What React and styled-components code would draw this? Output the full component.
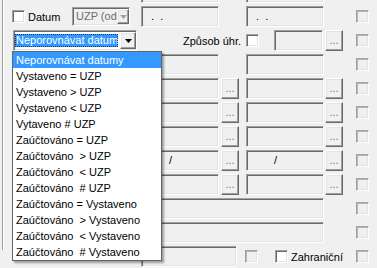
import React from 'react'
import styled, { createGlobalStyle } from 'styled-components'

const GlobalStyle = createGlobalStyle`
  html, body {
    margin: 0;
    padding: 0;
    background: #f0f0f0;
  }
  body {
    font-family: "Liberation Sans", Arial, sans-serif;
    font-size: 11px;
    color: #000;
  }
`

const sunken = `
  border: 1px solid;
  border-color: #a0a0a0 #ffffff #ffffff #a0a0a0;
  box-shadow: inset 1px 1px #696969, inset -1px -1px #e3e3e3;
`

const raised = `
  border: 1px solid;
  border-color: #ffffff #696969 #696969 #ffffff;
  box-shadow: inset -1px -1px #a0a0a0, inset 1px 1px #e3e3e3;
`

const Window = styled.div`
  position: relative;
  width: 377px;
  height: 268px;
  overflow: hidden;
  background: #f0f0f0;
`

const Group = styled.div`
  height: 100%;
  margin-left: 2px;
  border-left: 1px solid #a0a0a0;
  box-shadow: inset 1px 0 #ffffff;
`

const Rows = styled.div`
  display: flex;
  flex-direction: column;
  gap: 3px;
  width: 366px;
  margin-top: -18px;
`

const Row = styled.div`
  display: flex;
  align-items: center;
  height: 21px;
`

const Field = styled.div`
  ${sunken}
  box-sizing: border-box;
  flex: none;
  width: ${p => p.$w}px;
  height: 21px;
  margin-left: ${p => p.$ml || 0}px;
  padding-left: ${p => p.$pad ?? 9}px;
  line-height: 18px;
  white-space: pre;
  overflow: hidden;
  background: #f0f0f0;
`

const Browse = styled.div`
  ${raised}
  box-sizing: border-box;
  flex: none;
  width: 18px;
  height: 21px;
  margin-left: ${p => p.$ml || 0}px;
  color: #6d6d6d;
  line-height: 18px;
  text-align: center;
  background: #f0f0f0;
`

const Check = styled.div`
  box-sizing: border-box;
  flex: none;
  width: 13px;
  height: 13px;
  margin-left: ${p => (p.$right ? 'auto' : `${p.$ml || 0}px`)};
  border: 1px solid;
  border-color: #a0a0a0 #ffffff #ffffff #a0a0a0;
  box-shadow: inset 1px 1px ${p => (p.$on ? '#696969' : '#b4b4b4')},
    inset -1px -1px #e3e3e3;
  background: ${p => (p.$on ? '#ffffff' : '#f0f0f0')};
`

const Label = styled.span`
  flex: none;
  width: ${p => (p.$w ? `${p.$w}px` : 'auto')};
  margin-left: ${p => p.$ml || 0}px;
  white-space: nowrap;
`

const Combo = styled.div`
  ${sunken}
  box-sizing: border-box;
  flex: none;
  display: flex;
  width: ${p => p.$w}px;
  height: ${p => p.$h || 21}px;
  margin-left: ${p => p.$ml || 0}px;
  padding: 1px 0 1px ${p => (p.$disabled ? 3 : 1)}px;
  background: ${p => (p.$disabled ? '#f0f0f0' : '#ffffff')};
  color: ${p => (p.$disabled ? '#6d6d6d' : '#000')};
`

const ComboText = styled.div`
  flex: 1;
  min-width: 0;
  overflow: hidden;
  white-space: nowrap;
  line-height: ${p => (p.$selected ? 13 : 15)}px;
  margin: ${p => (p.$selected ? '2px 2px 2px 0' : '0')};
  padding-left: ${p => (p.$selected ? 1 : 0)}px;
  background: ${p => (p.$selected ? '#3399ff' : 'transparent')};
  color: ${p => (p.$selected ? '#ffffff' : 'inherit')};
  outline: ${p => (p.$selected ? '1px dotted #1a3a6a' : 'none')};
  outline-offset: -1px;
`

const DropButton = styled.div`
  ${raised}
  box-sizing: border-box;
  flex: none;
  width: ${p => p.$w}px;
  display: flex;
  align-items: center;
  justify-content: center;
  background: #f0f0f0;
`

const ListPopup = styled.div`
  position: absolute;
  left: 12px;
  top: 51px;
  width: 150px;
  box-sizing: border-box;
  border: 1px solid #646464;
  background: #ffffff;
  box-shadow: 2px 2px 2px rgba(0, 0, 0, 0.35);
`

const ListItem = styled.div`
  height: 16px;
  line-height: 16px;
  padding-left: 3px;
  white-space: pre;
  background: ${p => (p.$active ? '#3399ff' : 'transparent')};
  color: ${p => (p.$active ? '#ffffff' : '#000')};
`

const Arrow = ({ color }) => (
  <svg width="7" height="4" viewBox="0 0 7 4">
    <polygon points="0,0 7,0 3.5,4" fill={color} />
  </svg>
)

const options = [
  'Neporovnávat datumy',
  'Vystaveno = UZP',
  'Vystaveno > UZP',
  'Vystaveno < UZP',
  'Vytaveno # UZP',
  'Zaúčtováno = UZP',
  'Zaúčtováno  > UZP',
  'Zaúčtováno  < UZP',
  'Zaúčtováno  # UZP',
  'Zaúčtováno = Vystaveno',
  'Zaúčtováno  > Vystaveno',
  'Zaúčtováno  < Vystaveno',
  'Zaúčtováno  # Vystaveno',
]

// rows 3..8: two fields, most with "..." pickers
const pairRows = [
  { browse: false },
  { browse: true },
  { browse: true },
  { browse: true },
  { browse: true, text: '/' },
  { browse: true },
]

export default function App() {
  return (
    <>
      <GlobalStyle />
      <Window>
        <Group>
          <Rows>
            <Row>
              <Field $ml={138} $w={78} />
              <Field $ml={27} $w={78} />
            </Row>

            <Row>
              <Check $ml={9} $on />
              <Label $ml={3} $w={44}>Datum</Label>
              <Combo $w={58} $h={19} $disabled>
                <ComboText>UZP (od</ComboText>
                <DropButton $w={12}>
                  <Arrow color="#a0a0a0" />
                </DropButton>
              </Combo>
              <Field $ml={11} $w={78}>{'.  .'}</Field>
              <Field $ml={27} $w={78}>{'.  .'}</Field>
              <Check $right />
            </Row>

            <Row>
              <Combo $ml={10} $w={124}>
                <ComboText $selected>Neporovnávat datumy</ComboText>
                <DropButton $w={16}>
                  <Arrow color="#000" />
                </DropButton>
              </Combo>
              <Label $ml={46} $w={63}>Způsob úhr.</Label>
              <Check $on />
              <Field $ml={15} $w={49} />
              <Browse $ml={2}>...</Browse>
              <Check $right />
            </Row>

            {pairRows.map((r, i) => (
              <Row key={i}>
                <Field $ml={138} $w={78} $pad={27}>{r.text || ''}</Field>
                {r.browse && <Browse $ml={2}>...</Browse>}
                <Field $ml={r.browse ? 7 : 27} $w={78} $pad={27}>{r.text || ''}</Field>
                {r.browse && <Browse $ml={1}>...</Browse>}
                <Check $right />
              </Row>
            ))}

            <Row>
              <Field $ml={138} $w={183} />
              <Check $right />
            </Row>

            <Row>
              <Field $ml={138} $w={183} />
              <Check $right />
            </Row>

            <Row>
              <Field $ml={138} $w={96} />
              <Check $ml={8} />
              <Check $ml={17} $on />
              <Label $ml={3}>Zahraniční</Label>
              <Check $right />
            </Row>
          </Rows>
        </Group>

        <ListPopup>
          {options.map((o, i) => (
            <ListItem key={o} $active={i === 0}>{o}</ListItem>
          ))}
        </ListPopup>
      </Window>
    </>
  )
}
